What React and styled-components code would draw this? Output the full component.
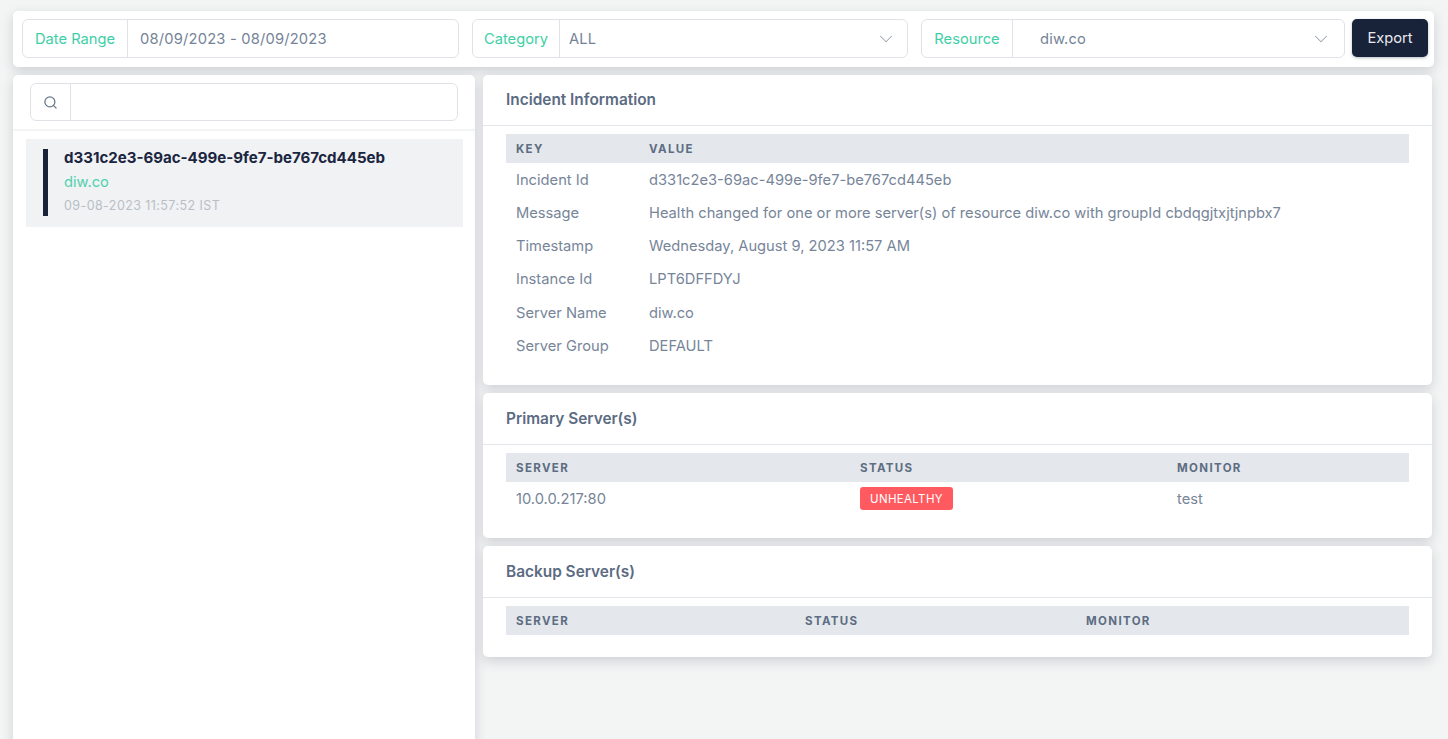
import React from "react";
import styled, { createGlobalStyle } from "styled-components";
import { Search, ChevronDown } from "lucide-react";

const Global = createGlobalStyle`
  html, body { margin: 0; padding: 0; height: 100%; overflow: hidden; }
  body { background: #f3f4f4; font-family: Inter, "Liberation Sans", sans-serif; color: #6e7f96; }
  * { box-sizing: border-box; }
`;
const panelShadow = "0 4px 12px rgba(60,70,90,.2)";
const Page = styled.div`
  height: 739px; overflow: hidden; padding: 11px 14px 0 13px;
  display: flex; flex-direction: column; gap: 8px;
`;
const Toolbar = styled.div`
  flex: none; height: 56px; width: 1421px; background: #fff; border-radius: 5px;
  box-shadow: ${panelShadow};
  display: flex; align-items: flex-start; padding: 8px 6px 0 9px;
`;
const Group = styled.div`
  width: ${p => p.$w}px; margin-right: ${p => p.$mr}px; height: 39px; display: flex;
  border: 1px solid #dfe3e8; border-radius: 6px; background: #fff; font-size: 14.7px;
`;
const GroupLabel = styled.div`
  width: ${p => p.$w}px; flex: none; border-right: 1px solid #dfe3e8; color: #3ecfa6;
  display: flex; align-items: center; justify-content: center;
`;
const GroupValue = styled.div`
  flex: 1; display: flex; align-items: center; justify-content: space-between;
  padding: 0 ${p => p.$pr || 15}px 0 ${p => p.$pl}px; color: #748398; letter-spacing: .2px;
`;
const ExportButton = styled.button`
  width: 76px; height: 38px; border: 0; border-radius: 5px; background: #182239; color: #e8eaee;
  font: 400 14.7px Inter, sans-serif; padding-bottom: 2px; box-shadow: 0 1px 3px rgba(20,30,50,.3);
`;
const Body = styled.div`
  flex: 1; display: flex; gap: 8px; align-items: flex-start; min-height: 0;
`;
const Side = styled.aside`
  width: 462px; height: 700px; flex: none; background: #fff; border-radius: 5px;
  box-shadow: ${panelShadow};
`;
const SearchRow = styled.div`
  height: 56px; padding: 8px 17px 0; border-bottom: 2px solid #f3f4f5;
`;
const SearchBox = styled.div`
  height: 38px; display: flex; border: 1px solid #dfe3e8; border-radius: 6px;
`;
const SearchIcon = styled.div`
  width: 40px; border-right: 1px solid #dfe3e8; display: flex; align-items: center; justify-content: center; color: #66768c;
`;
const Incident = styled.div`
  margin: 8px 12px 0 13px; height: 88px; background: #f0f2f4; padding: 10px 17px;
  display: flex; gap: 16px;
`;
const Bar = styled.div`width: 5px; height: 67px; background: #182239; flex: none;`;
const IncidentText = styled.div`display: flex; flex-direction: column; min-width: 0;`;
const IncidentId = styled.div`font-size: 15.05px; font-weight: 700; line-height: 18px; color: #1b2540; white-space: nowrap;`;
const IncidentHost = styled.div`font-size: 14.7px; line-height: 20px; margin-top: 5px; color: #4fd1ae;`;
const IncidentTime = styled.div`font-size: 12.5px; letter-spacing: .42px; line-height: 16px; margin-top: 6px; color: #b9bec6;`;
const Main = styled.main`
  width: 949px; flex: none; display: flex; flex-direction: column; gap: 8px;
`;
const Card = styled.section`
  height: ${p => p.$h}px; background: #fff; border-radius: 5px; box-shadow: ${panelShadow};
`;
const CardHeader = styled.h2`
  margin: 0; height: ${p => p.$h || 51}px; padding: 0 23px 1px; display: flex; align-items: center;
  border-bottom: 1px solid #e3e6ea; font-size: 15.4px; font-weight: 600; color: #5b6b82;
`;
const Table = styled.div`margin: 8px 23px 0; width: 903px;`;
const Row = styled.div`
  display: grid; grid-template-columns: ${p => p.$cols}; padding: 0 10px; align-items: center;
`;
const HeadRow = styled(Row)`
  height: 29px; background: #e4e7eb; font-size: 11.5px; font-weight: 700; letter-spacing: 1.35px; color: #5d6d83;
`;
const DataRow = styled(Row)`
  height: 33.25px; font-size: 14.7px; color: #778599;
`;
const StatusBadge = styled.span`
  justify-self: start; height: 23px; padding: 0 10px; display: inline-flex; align-items: center;
  background: #ff5a5f; color: #fff; border-radius: 3px; font-size: 11.5px; letter-spacing: .35px;
`;
const Arrow = styled(ChevronDown)`color: #9aa3b0;`;

const infoRows = [
  ["Incident Id", "d331c2e3-69ac-499e-9fe7-be767cd445eb"],
  ["Message", "Health changed for one or more server(s) of resource diw.co with groupId cbdqgjtxjtjnpbx7"],
  ["Timestamp", "Wednesday, August 9, 2023 11:57 AM"],
  ["Instance Id", "LPT6DFFDYJ"],
  ["Server Name", "diw.co"],
  ["Server Group", "DEFAULT"],
];

export default function App() {
  return (
    <Page>
      <Global />
      <Toolbar>
        <Group $w={437} $mr={13}>
          <GroupLabel $w={105}>Date Range</GroupLabel>
          <GroupValue $pl={12}>08/09/2023 - 08/09/2023</GroupValue>
        </Group>
        <Group $w={436} $mr={13}>
          <GroupLabel $w={87}>Category</GroupLabel>
          <GroupValue $pl={9} $pr={10}>ALL<Arrow size={22} strokeWidth={1.1} /></GroupValue>
        </Group>
        <Group $w={424} $mr={7}>
          <GroupLabel $w={91}>Resource</GroupLabel>
          <GroupValue $pl={27} $pr={12}>diw.co<Arrow size={22} strokeWidth={1.1} /></GroupValue>
        </Group>
        <ExportButton>Export</ExportButton>
      </Toolbar>
      <Body>
        <Side>
          <SearchRow>
            <SearchBox>
              <SearchIcon><Search size={15} strokeWidth={2} /></SearchIcon>
            </SearchBox>
          </SearchRow>
          <Incident>
            <Bar />
            <IncidentText>
              <IncidentId>d331c2e3-69ac-499e-9fe7-be767cd445eb</IncidentId>
              <IncidentHost>diw.co</IncidentHost>
              <IncidentTime>09-08-2023 11:57:52 IST</IncidentTime>
            </IncidentText>
          </Incident>
        </Side>
        <Main>
          <Card $h={310}>
            <CardHeader>Incident Information</CardHeader>
            <Table>
              <HeadRow $cols="133px 1fr"><span>KEY</span><span>VALUE</span></HeadRow>
              {infoRows.map(([k, v]) => (
                <DataRow key={k} $cols="133px 1fr"><span>{k}</span><span>{v}</span></DataRow>
              ))}
            </Table>
          </Card>
          <Card $h={145}>
            <CardHeader $h={52}>Primary Server(s)</CardHeader>
            <Table>
              <HeadRow $cols="344px 317px 1fr"><span>SERVER</span><span>STATUS</span><span>MONITOR</span></HeadRow>
              <DataRow $cols="344px 317px 1fr"><span>10.0.0.217:80</span><StatusBadge>UNHEALTHY</StatusBadge><span>test</span></DataRow>
            </Table>
          </Card>
          <Card $h={111}>
            <CardHeader $h={52}>Backup Server(s)</CardHeader>
            <Table>
              <HeadRow $cols="289px 281px 1fr"><span>SERVER</span><span>STATUS</span><span>MONITOR</span></HeadRow>
            </Table>
          </Card>
        </Main>
      </Body>
    </Page>
  );
}
